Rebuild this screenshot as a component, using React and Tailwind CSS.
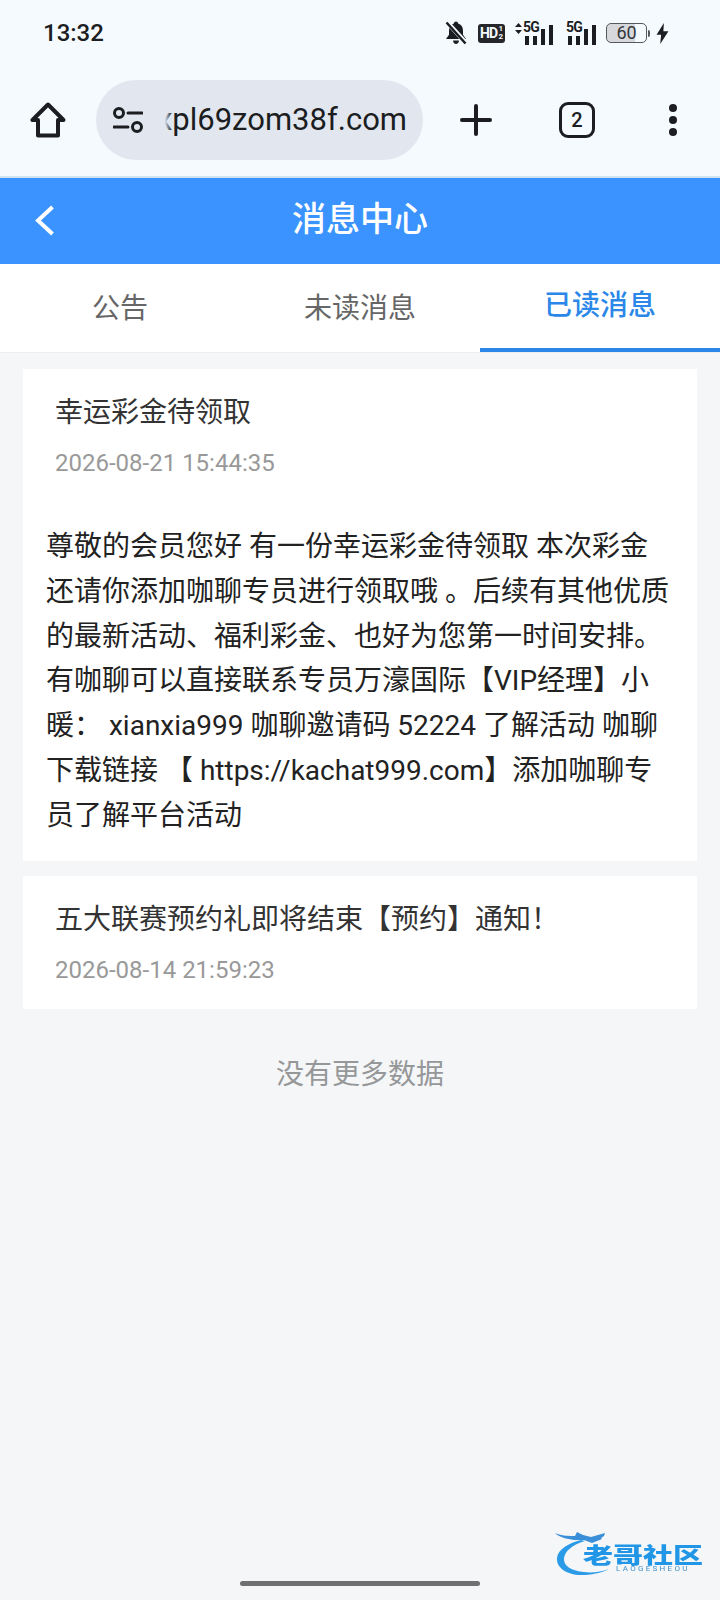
import React from "react";

const CJK = "font-['Roboto','Noto_Sans_CJK_SC',sans-serif]";

const Bell = () => (
  <svg width="22" height="24" viewBox="0 0 22 24" fill="#1b1d21">
    <path d="M11 0.500c1.200 0 2 .8 2.100 2 3 .9 4.900 3.500 4.900 6.900v4.300l3 4.300H1l3-4.300V9.400c0-3.400 1.900-6 4.900-6.900.1-1.200.9-2 2.100-2z" />
    <path d="M8 19.500h6c-.2 2-1.400 3.500-3 3.500s-2.800-1.500-3-3.500z" />
    <path d="M2 1l19 21" stroke="#f5faff" strokeWidth="4.500" />
    <path d="M1.500 1.500l19 21" stroke="#1b1d21" strokeWidth="2.500" />
  </svg>
);

const Signal = ({ arrows }) => (
  <div className={`relative h-[24px] ${arrows ? "w-[38px]" : "w-[30px]"}`}>
    {arrows && (
      <svg className="absolute left-0 top-[2px]" width="7" height="11" viewBox="0 0 7 11" fill="#1b1d21">
        <path d="M3.500 0L7 4H0zM3.500 11L0 7h7z" />
      </svg>
    )}
    <span className={`absolute top-[-1px] font-['Roboto'] text-[14px] font-bold leading-[14px] tracking-[-0.8px] text-[#1b1d21] ${arrows ? "left-[8px]" : "left-0"}`}>
      5G
    </span>
    <div className="absolute bottom-0 right-0 flex items-end gap-[3.500px]">
      <div className="h-[9px] w-[4.500px] bg-[#1b1d21]" />
      <div className="h-[9px] w-[4.500px] bg-[#1b1d21]" />
      <div className="h-[16px] w-[4.500px] bg-[#1b1d21]" />
      <div className="h-[20px] w-[4.500px] bg-[#1b1d21]" />
    </div>
  </div>
);

const StatusBar = () => (
  <div className="flex h-[66px] items-center justify-between pl-[43px] pr-[51px]">
    <span className="font-['Roboto'] text-[24px] font-medium text-[#1b1d21]">13:32</span>
    <div className="flex items-center">
      <Bell />
      <div className="ml-[11px] flex h-[19px] w-[27px] items-center overflow-hidden rounded-[3px] bg-[#24262a] pl-[2px] font-['Roboto'] text-[14px] font-bold tracking-[-0.8px] text-[#f5faff]">
        HD<span className="ml-[1px] text-[8px] leading-[8px]">1<br />2</span>
      </div>
      <div className="ml-[10px]">
        <Signal arrows />
      </div>
      <div className="ml-[13px]">
        <Signal />
      </div>
      <div className="ml-[10px] flex h-[20px] w-[41px] items-center justify-center rounded-[5px] border-[1.500px] border-[#55585d] bg-[linear-gradient(90deg,#d6d8dc_0,#d6d8dc_72%,transparent_72%)] font-['Roboto'] text-[18px] leading-none text-[#33363a]">
        60
      </div>
      <div className="ml-[1px] h-[7px] w-[2px] rounded-r-[2px] bg-[#55585d]" />
      <svg className="ml-[6px]" width="13" height="21" viewBox="0 0 13 23" fill="#1b1d21">
        <path d="M8 0L0 13h5l-1 10 9-14H7.500z" />
      </svg>
    </div>
  </div>
);

const BrowserBar = () => (
  <div className="flex h-[112px] items-center border-b-[2px] border-[#cfe3f3] pb-[2px]">
    <svg className="ml-[30px]" width="36" height="36" viewBox="0 0 36 36" fill="none" stroke="#1b1d21" strokeWidth="4" strokeLinejoin="round">
      <path d="M18 2.500L2.500 18H8v15.500h20V18h5.500z" />
    </svg>
    <div className="ml-[30px] flex h-[80px] w-[327px] items-center overflow-hidden rounded-full bg-[#e2e7ef]">
      <svg className="ml-[17px] shrink-0" width="30" height="26" viewBox="0 0 30 26" fill="none" stroke="#1b1d21" strokeWidth="3">
        <circle cx="6" cy="6" r="4.500" />
        <path d="M15 6h14M1 20h14" strokeLinecap="round" />
        <circle cx="24" cy="20" r="4.500" />
      </svg>
      <div className="relative ml-[5px] flex w-[259px] justify-end">
        <div className="shrink-0 whitespace-nowrap font-['Roboto'] text-[31px] leading-[40px] text-[#1b1d21]">xpl69zom38f.com</div>
        <div className="absolute inset-y-0 left-0 w-[24px] bg-[linear-gradient(90deg,#e2e7ef,#e2e7ef_70%,transparent)]" />
      </div>
    </div>
    <svg className="ml-[37px]" width="32" height="32" viewBox="0 0 32 32" stroke="#1b1d21" strokeWidth="4" strokeLinecap="round">
      <path d="M16 2v28M2 16h28" />
    </svg>
    <div className="ml-[67px] flex h-[36px] w-[36px] items-center justify-center rounded-[9px] border-[3.500px] border-[#1b1d21] font-['Roboto'] text-[20px] font-medium text-[#1b1d21]">
      2
    </div>
    <div className="ml-[74px] flex flex-col gap-[4px]">
      <div className="h-[8px] w-[8px] rounded-full bg-[#1b1d21]" />
      <div className="h-[8px] w-[8px] rounded-full bg-[#1b1d21]" />
      <div className="h-[8px] w-[8px] rounded-full bg-[#1b1d21]" />
    </div>
  </div>
);

const NavBar = () => (
  <div className="relative flex h-[86px] items-center justify-center bg-[#3a93ff] pb-[4px]">
    <svg className="absolute left-[34px] top-[27px]" width="21" height="31" viewBox="0 0 21 31" fill="none" stroke="#fff" strokeWidth="4">
      <path d="M18.500 2L4 15.500 18.500 29" />
    </svg>
    <h1 className="text-[34px] font-medium leading-[40px] text-white">消息中心</h1>
  </div>
);

const Tabs = () => (
  <div className="flex h-[89px] border-b border-[#eceef1] bg-white">
    <div className="flex w-[240px] items-center justify-center pt-[2px] text-[28px] text-[#666]">公告</div>
    <div className="flex w-[240px] items-center justify-center pt-[2px] text-[28px] text-[#666]">未读消息</div>
    <div className="flex w-[240px] items-center justify-center border-b-[4px] border-[#2b87e8] text-[28px] font-medium text-[#2b87e8]">
      已读消息
    </div>
  </div>
);

const Message = ({ title, date, children }) => (
  <div className="bg-white">
    <div className="px-[32px] pt-[24px]">
      <div className="text-[28px] leading-[40px] text-[#333]">{title}</div>
      <div className="mt-[15px] text-[24px] leading-[30px] text-[#999]">{date}</div>
    </div>
    {children ? (
      <div className="pb-[22px] pl-[23px] pr-[24px] pt-[47px] text-[28px] leading-[44.800px] text-[#222]">{children}</div>
    ) : (
      <div className="h-[24px]" />
    )}
  </div>
);

export default function App() {
  return (
    <div className={`relative flex h-[1600px] w-[720px] flex-col overflow-hidden bg-[#f4f6f8] ${CJK}`}>
      <div className="bg-[#f5faff]">
        <StatusBar />
        <BrowserBar />
      </div>
      <NavBar />
      <Tabs />
      <div className="flex flex-col gap-[15px] px-[23px] pt-[16px]">
        <Message title="幸运彩金待领取" date="2026-08-21 15:44:35">
          尊敬的会员您好 有一份幸运彩金待领取 本次彩金还请你添加咖聊专员进行领取哦 。后续有其他优质的最新活动、福利彩金、也好为您第一时间安排。有咖聊可以直接联系专员万濠国际【VIP经理】小暖： xianxia999 咖聊邀请码 52224 了解活动 咖聊下载链接 【 https://kachat999.com】添加咖聊专员了解平台活动
        </Message>
        <Message title="五大联赛预约礼即将结束【预约】通知！" date="2026-08-14 21:59:23" />
      </div>
      <div className="mt-[46px] text-center text-[28px] leading-[40px] text-[#969799]">没有更多数据</div>

      {/* watermark */}
      <div className="absolute left-[555px] top-[1530px] h-[48px] w-[150px] blur-[0.6px]">
        <svg className="absolute left-0 top-0" width="60" height="47" viewBox="0 0 60 47" fill="none">
          <path d="M26 10C14 13 3 19 2 28c-1 9 9 17 24 17 10 0 20-2 28-6-8 3-17 4-25 3C17 41 8 36 9 28c1-7 8-13 21-17z" fill="#2b9be8" />
          <path d="M0 3c7 3 14 3 20 3l2-4 6 3 8 2 14-4-1 3 -3 2 1 1-10 4-8-3-10 0C12 9 4 7 0 3z" fill="#3a8fd8" />
        </svg>
        <div className="absolute left-[28px] top-[16px] origin-center scale-y-[0.72] whitespace-nowrap text-[30px] font-black leading-[20px] text-[#2296e6]">老哥社区</div>
        <div className="absolute left-[61px] top-[34px] whitespace-nowrap font-['Roboto'] text-[8px] leading-[10px] tracking-[2.300px] text-[#3f8fc9]">LAOGESHEOU</div>
      </div>

      {/* home indicator */}
      <div className="absolute bottom-[14px] left-[240px] h-[5px] w-[240px] rounded-full bg-[#6f7072]" />
    </div>
  );
}
